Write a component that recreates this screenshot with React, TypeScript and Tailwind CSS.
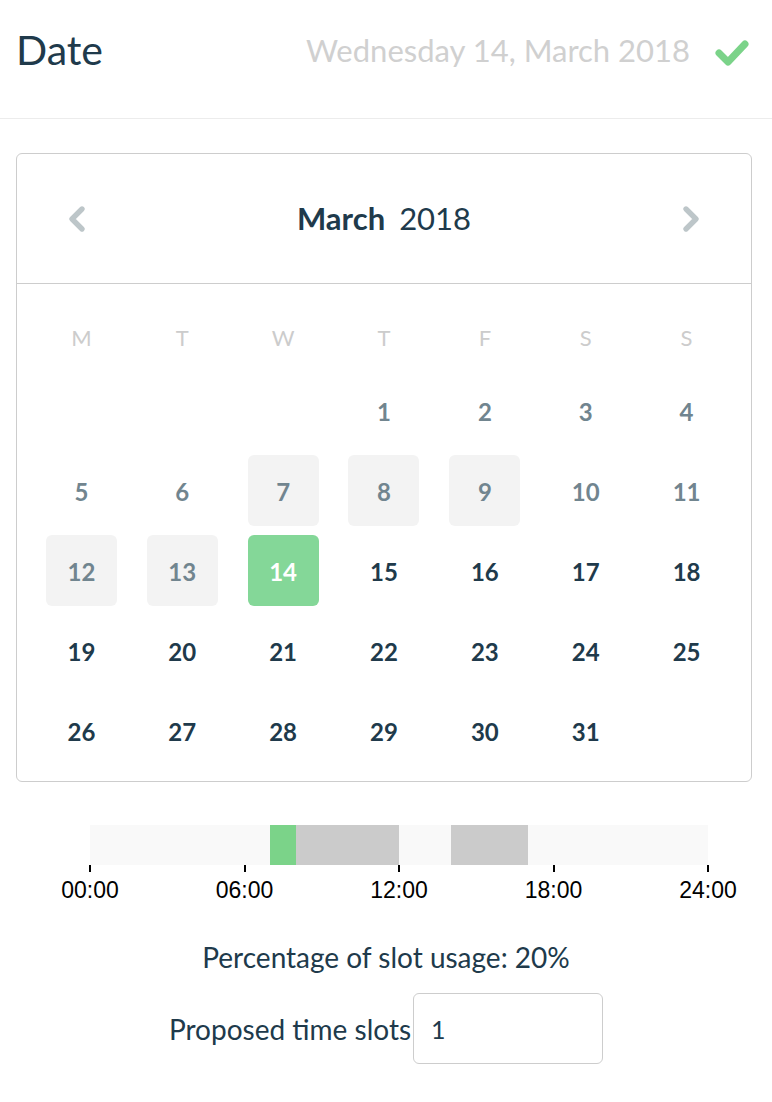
import { ChevronLeft, ChevronRight } from "lucide-react";

const FONT = { fontFamily: "Lato, 'Noto Sans', sans-serif" };
const WEEKDAYS = ["M", "T", "W", "T", "F", "S", "S"];

// March 2018 starts on a Thursday (3 empty slots)
const LEAD = 3;
const DAYS_IN_MONTH = 31;
const SELECTED = 14;
const BLOCKED = [7, 8, 9, 12, 13];

const BAR_WIDTH = 618;
// hour ranges shown on the day bar
const SLOTS = [
  { from: 7, to: 8, color: "bg-[#7bd389]" },
  { from: 8, to: 12, color: "bg-[#cbcbcb]" },
  { from: 14, to: 17, color: "bg-[#cbcbcb]" },
];
const TICKS = ["00:00", "06:00", "12:00", "18:00", "24:00"];

function DayCell({ day }: { day: number | null }) {
  if (!day) return <div className="h-[80px]" />;
  const past = day < SELECTED;
  const blocked = BLOCKED.includes(day);
  const selected = day === SELECTED;
  return (
    <div className="flex h-[80px] items-center justify-center">
      <div
        className={`flex h-[71px] w-[71px] items-center justify-center rounded-md pt-[3px] text-[24px] font-bold ${
          selected
            ? "bg-[#84d798] text-white"
            : blocked
              ? "bg-[#f3f3f3] text-[#71858f]"
              : past
                ? "text-[#71858f]"
                : "text-[#203a4b]"
        }`}
      >
        {day}
      </div>
    </div>
  );
}

export default function App() {
  const cells: (number | null)[] = [
    ...Array.from({ length: LEAD }, () => null),
    ...Array.from({ length: DAYS_IN_MONTH }, (_, i) => i + 1),
  ];
  while (cells.length % 7) cells.push(null);

  return (
    <div className="min-h-[1102px] w-[772px] bg-white" style={FONT}>
      <header className="flex h-[119px] items-center justify-between border-b border-[#ececec] pb-[18px] pl-[16px] pr-[22px]">
        <h1 className="text-[41px] text-[#203a4b]">Date</h1>
        <div className="flex items-center gap-[24px]">
          <span className="text-[31px] text-[#d0d0d0]">Wednesday 14, March 2018</span>
          <svg width="36" height="28" viewBox="0 0 36 28" className="mt-[6px]">
            <polyline
              points="5,14 14,23 31,5"
              fill="none"
              stroke="#7bd389"
              strokeWidth="7"
              strokeLinecap="round"
              strokeLinejoin="round"
            />
          </svg>
        </div>
      </header>

      <section className="ml-4 mt-[34px] w-[736px] rounded-md border border-[#cdcdcd]">
        <div className="flex h-[130px] items-center justify-between border-b border-[#cdcdcd] px-[40px]">
          <ChevronLeft className="h-10 w-10 text-[#bdc6c9]" strokeWidth={3.2} />
          <div className="text-[31px] text-[#203a4b]">
            <span className="font-bold">March</span>
            <span className="ml-[14px]">2018</span>
          </div>
          <ChevronRight className="h-10 w-10 text-[#bdc6c9]" strokeWidth={3.2} />
        </div>

        <div className="px-[14px] pb-[11px] pt-[20px]">
          <div className="grid h-[66px] grid-cols-7">
            {WEEKDAYS.map((d, i) => (
              <div key={i} className="flex items-center justify-center text-[22px] text-[#cccccc]">
                {d}
              </div>
            ))}
          </div>
          <div className="grid grid-cols-7">
            {cells.map((day, i) => (
              <DayCell key={i} day={day} />
            ))}
          </div>
        </div>
      </section>

      <div className="ml-[90px] mt-[43px] w-[618px]">
        <div className="relative h-[40px] bg-[#f9f9f9]">
          {SLOTS.map((s) => (
            <div
              key={s.from}
              className={`absolute inset-y-0 ${s.color}`}
              style={{ left: (s.from / 24) * BAR_WIDTH, width: ((s.to - s.from) / 24) * BAR_WIDTH }}
            />
          ))}
        </div>
        <div className="flex justify-between">
          {TICKS.map((t) => (
            <div key={t} className="flex w-0 flex-col items-center">
              <div className="h-[7px] w-[2px] bg-black" />
              <span
                className="mt-[4px] whitespace-nowrap text-[23px] leading-[28px] text-black"
                style={{ fontFamily: "'Liberation Sans', Arial, sans-serif" }}
              >
                {t}
              </span>
            </div>
          ))}
        </div>
      </div>

      <p className="mt-[32px] text-center text-[28px] text-[#203a4b]">Percentage of slot usage: 20%</p>

      <div className="mt-[15px] flex items-center justify-center">
        <label className="text-[28px] text-[#203a4b]">Proposed time slots</label>
        <input
          defaultValue="1"
          className="ml-[2px] h-[71px] w-[190px] rounded-md border border-[#cdcdcd] px-[17px] text-[25px] text-[#203a4b] outline-none"
        />
      </div>
    </div>
  );
}
